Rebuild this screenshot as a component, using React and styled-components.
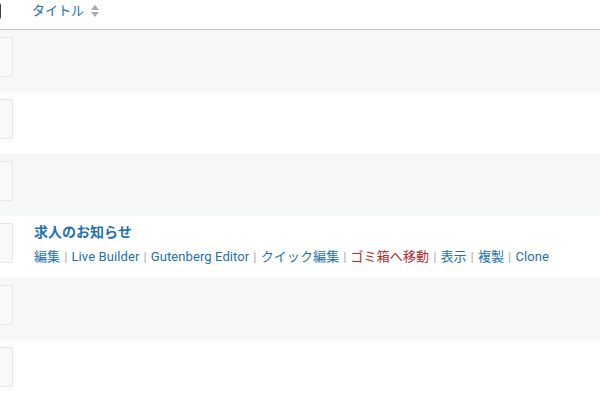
import React from 'react';
import styled, { createGlobalStyle } from 'styled-components';

const GlobalStyle = createGlobalStyle`
	html, body {
		margin: 0;
		padding: 0;
		background: #fff;
		overflow: hidden;
	}
	body {
		font-family: 'Roboto', 'Noto Sans CJK JP', sans-serif;
		font-size: 13px;
		color: #3c434a;
	}
`;

const Table = styled.div`
	margin-left: -28px;
	width: 628px;
`;

const Header = styled.div`
	height: 29px;
	display: flex;
	align-items: flex-start;
	border-bottom: 1px solid #c3c4c7;
	padding-left: 13px;
`;

const CheckBox = styled.span`
	box-sizing: border-box;
	width: 16px;
	height: 16px;
	margin-top: 3px;
	border: 2px solid #3c434a;
	border-radius: 2px;
	background: #fff;
`;

const SortLink = styled.a`
	display: flex;
	align-items: center;
	gap: 6px;
	margin-left: 31px;
	margin-top: 1px;
	color: #2271b1;
	font-size: 13px;
	line-height: 20px;
	text-decoration: none;
`;

const Row = styled.div`
	height: 62px;
	display: flex;
	align-items: flex-start;
	gap: 21px;
	background: ${(p) => (p.$alt ? '#f6f7f7' : '#fff')};
`;

const Thumb = styled.div`
	box-sizing: border-box;
	flex: none;
	width: 41px;
	height: 40px;
	margin-top: 7px;
	border: 1px solid #e6e6e6;
	border-radius: 2px;
	background: #f9f9f9;
`;

const Cell = styled.div`
	padding-top: 7px;
`;

const RowTitle = styled.a`
	display: block;
	color: #2271b1;
	font-size: 14px;
	font-weight: 700;
	line-height: 19px;
	text-decoration: none;
`;

const Actions = styled.div`
	margin-top: 5px;
	line-height: 19px;
	font-size: 13px;
	white-space: nowrap;
	letter-spacing: 0.1px;
`;

const Sep = styled.span`
	color: #a7aaad;
	padding: 0 4px;
`;

const ActionLink = styled.a`
	color: ${(p) => (p.$danger ? '#b32d2e' : '#2271b1')};
	text-decoration: none;
`;

const SortArrows = () => (
	<svg width='10' height='14' viewBox='0 0 10 14'>
		<path d='M5 1 L9 6 H1 Z' fill='#a7aaad' />
		<path d='M5 13 L9 8 H1 Z' fill='#a7aaad' />
	</svg>
);

const actions = [
	{ label: '編集' },
	{ label: 'Live Builder' },
	{ label: 'Gutenberg Editor' },
	{ label: 'クイック編集' },
	{ label: 'ゴミ箱へ移動', danger: true },
	{ label: '表示' },
	{ label: '複製' },
	{ label: 'Clone' },
];

const rows = [null, null, null, '求人のお知らせ', null, null];

const App = () => (
	<>
		<GlobalStyle />
		<Table>
			<Header>
				<CheckBox />
				<SortLink href='#'>
					タイトル <SortArrows />
				</SortLink>
			</Header>
			{rows.map((title, i) => (
				<Row key={i} $alt={i % 2 === 0}>
					<Thumb />
					{title && (
						<Cell>
							<RowTitle href='#'>{title}</RowTitle>
							<Actions>
								{actions.map((a, j) => (
									<React.Fragment key={a.label}>
										{j > 0 && <Sep>|</Sep>}
										<ActionLink href='#' $danger={a.danger}>
											{a.label}
										</ActionLink>
									</React.Fragment>
								))}
							</Actions>
						</Cell>
					)}
				</Row>
			))}
		</Table>
	</>
);

export default App;
